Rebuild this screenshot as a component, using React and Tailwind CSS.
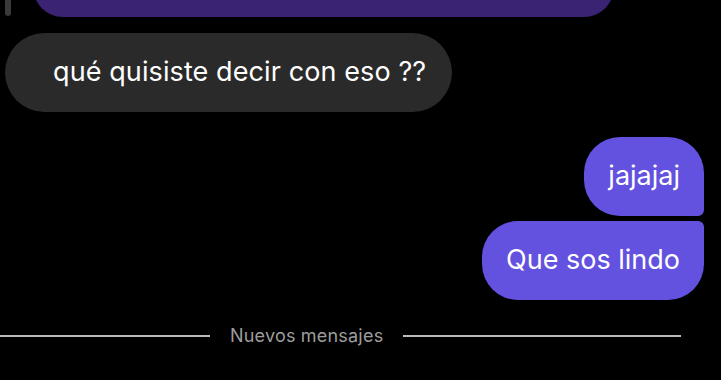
export default function App() {
  return (
    <div className="relative w-[721px] h-[380px] overflow-hidden bg-black" style={{ fontFamily: "Inter, 'Liberation Sans', sans-serif" }}>
      <div className="absolute left-[5px] top-[-10px] w-[6px] h-[26px] rounded-full bg-[#3a3a3a]" />
      <div className="flex flex-col">
        <div className="ml-[33px] w-[581px] h-[60px] mt-[-43px] rounded-[32px] bg-[#3a2373]" />
        <div className="mt-[16px] ml-[5px] self-start h-[79px] flex items-center pl-[48px] pr-[26px] rounded-full bg-[#2a2a2a] text-white text-[27px] tracking-[0.1px]">
          qué quisiste decir con eso ??
        </div>
        <div className="mt-[25px] mr-[17px] self-end h-[79px] flex items-center px-[24px] rounded-[36px] rounded-br-[6px] bg-[#6351e0] text-white text-[27px]">
          jajajaj
        </div>
        <div className="mt-[5px] mr-[17px] self-end h-[79px] flex items-center px-[24px] rounded-[36px] rounded-tr-[6px] bg-[#6351e0] text-white text-[27px]">
          Que sos lindo
        </div>
        <div className="mt-[22px] flex items-center pr-[40px]">
          <div className="w-[210px] h-[2px] bg-[#bcbcbc]" />
          <span className="px-[20px] text-[18px] text-[#9d9d9d] tracking-[0.2px]">Nuevos mensajes</span>
          <div className="flex-1 h-[2px] bg-[#bcbcbc]" />
        </div>
      </div>
    </div>
  );
}
